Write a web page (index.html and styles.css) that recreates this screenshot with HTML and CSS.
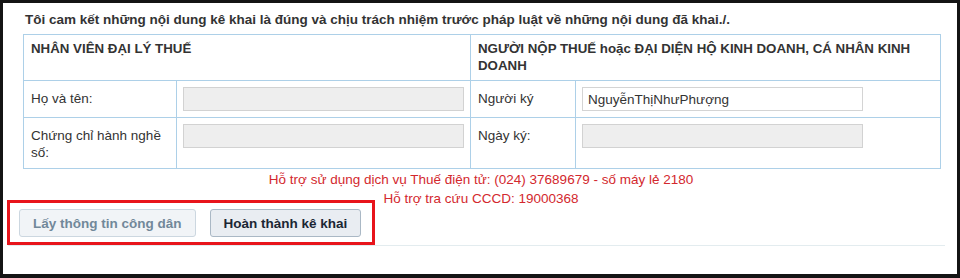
FILE: index.html
```html
<!DOCTYPE html>
<html lang="vi">
<head>
<meta charset="UTF-8">
<meta name="viewport" content="width=device-width, initial-scale=1.0">
<title>Kê khai - Xác nhận</title>
<link rel="stylesheet" href="styles.css">
</head>
<body>
<div class="frame">
    <p class="pledge">Tôi cam kết những nội dung kê khai là đúng và chịu trách nhiệm trước pháp luật về những nội dung đã khai./.</p>

    <table class="sign-table">
        <colgroup>
            <col class="c-label">
            <col class="c-input">
            <col class="c-label2">
            <col class="c-input2">
        </colgroup>
        <thead>
            <tr>
                <th colspan="2">NHÂN VIÊN ĐẠI LÝ THUẾ</th>
                <th colspan="2">NGƯỜI NỘP THUẾ hoặc ĐẠI DIỆN HỘ KINH DOANH, CÁ NHÂN KINH DOANH</th>
            </tr>
        </thead>
        <tbody>
            <tr>
                <td class="label">Họ và tên:</td>
                <td class="field"><input type="text" disabled></td>
                <td class="label">Người ký</td>
                <td class="field"><input type="text" value="NguyễnThịNhưPhượng"></td>
            </tr>
            <tr>
                <td class="label">Chứng chỉ hành nghề số:</td>
                <td class="field"><input type="text" disabled></td>
                <td class="label">Ngày ký:</td>
                <td class="field"><input type="text" disabled></td>
            </tr>
        </tbody>
    </table>

    <div class="support">
        <p>Hỗ trợ sử dụng dịch vụ Thuế điện tử: (024) 37689679 - số máy lẻ 2180</p>
        <p>Hỗ trợ tra cứu CCCD: 19000368</p>
    </div>

    <div class="action-bar">
        <div class="buttons">
            <button class="btn btn-muted" disabled>Lấy thông tin công dân</button>
            <button class="btn">Hoàn thành kê khai</button>
        </div>
    </div>
</div>
</body>
</html>
```

FILE: styles.css
```css
* { margin: 0; padding: 0; box-sizing: border-box; }
html, body { background: #111; }
body {
    font-family: "Liberation Sans", Arial, sans-serif;
    font-size: 13.5px;
    color: #333;
}
.frame {
    height: 278px;
    border: 3px solid #141414;
    border-bottom-width: 4px;
    background: #fff;
    padding: 0 12px 0 5px;
}
.pledge {
    font-weight: bold;
    line-height: 17px;
    padding: 8px 0 0 17px;
    height: 31px;
}
.sign-table {
    margin-left: 15px;
    width: 917px;
    border-collapse: collapse;
    table-layout: fixed;
}
.c-label { width: 153px; }
.c-input { width: 294px; }
.c-label2 { width: 105px; }
.c-input2 { width: 365px; }
.sign-table th, .sign-table td {
    border: 1px solid #add0e8;
    vertical-align: top;
    text-align: left;
}
.sign-table th {
    font-size: 13.3px;
    line-height: 17px;
    padding: 5px 7px;
    height: 46px;
}
.sign-table td.label {
    line-height: 17px;
    padding: 9px 7px 7px 7px;
}
.sign-table td.field { padding: 6px 6px; }
.sign-table td.field input {
    display: block;
    width: 281px;
    height: 24px;
    font: 13.5px "Liberation Sans", Arial, sans-serif;
    color: #333;
    border: 1px solid #d4d4d4;
    background: #fff;
    padding: 0 5px;
}
.sign-table td.field input:disabled {
    background: #eeeeee;
    border-color: #d2d2d2;
}
.support {
    margin: 0 6px 0 15px;
    padding-top: 1px;
    text-align: center;
    color: #d3282e;
    line-height: 19px;
    height: 40px;
}
.action-bar {
    padding: 0 0 8px 11px;
    border-bottom: 1px solid #e3ecef;
}
.buttons {
    display: inline-flex;
    gap: 14px;
    position: relative;
}
/* highlight outline around the buttons */
.buttons::after {
    content: "";
    position: absolute;
    top: -9px; left: -12px; right: -14px; bottom: -8px;
    border: 3px solid #e8141b;
    pointer-events: none;
}
.btn {
    height: 28px;
    padding: 0 13px;
    font: bold 13.5px "Liberation Sans", Arial, sans-serif;
    color: #1b2634;
    background: #e9edf2;
    border: 1px solid #aab8c5;
    border-radius: 3px;
    cursor: pointer;
}
.btn-muted {
    color: #71889a;
    background: #f1f4f7;
    border-color: #ccd7e0;
    cursor: default;
}
```
